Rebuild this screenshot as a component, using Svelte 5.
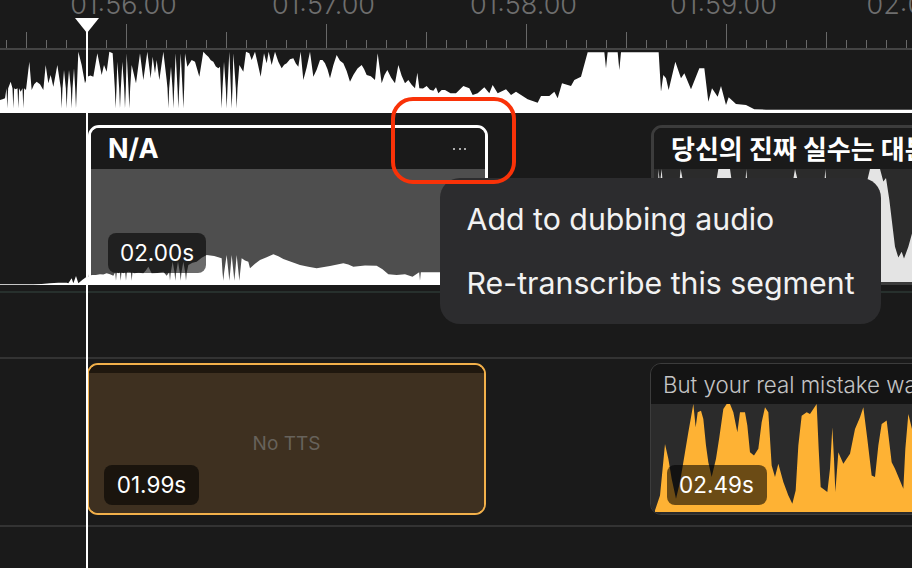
<script lang="ts">
    const labels = ["01:56.00", "01:57.00", "01:58.00", "01:59.00", "02:00.00"];
    const ticks = Array.from({ length: 46 }, (_, i) => (i % 10 === 6 ? "tall" : i % 10 === 1 ? "mid" : "small"));

    // points traced off the 3x crops, so the viewBoxes below are 3x as well
    const overviewLeft = [
        0,300, 15,295, 22,325, 32,245, 40,325, 47,268, 55,325, 62,275, 70,325, 78,270, 88,185, 95,270, 110,245, 130,270,
        137,195, 145,250, 152,225, 160,260, 172,195, 185,325, 192,210, 200,325, 207,210, 215,325, 222,205, 228,325, 235,155,
        245,195, 255,250, 262,230, 280,230, 292,160, 305,225, 312,195, 320,215, 328,155, 338,160, 347,325, 352,185, 360,325,
        367,185, 375,325, 380,160, 388,325, 395,195, 408,250, 420,160, 430,240, 442,155, 452,235, 458,170, 465,220, 470,180,
        478,240, 490,155, 500,240, 505,325, 513,200, 520,325, 527,160, 535,325, 542,160, 550,325, 555,160, 562,200, 575,180,
        585,185, 598,230, 610,155, 625,170, 640,185, 655,205, 660,200, 665,325, 672,185, 680,325, 688,155, 695,325, 700,160,
        710,325, 718,195, 730,215, 738,155, 748,160, 755,180, 765,155, 782,230, 792,160, 800,190, 806,155, 815,195, 825,155,
        845,205, 860,190, 880,175, 895,200, 902,155, 910,240, 930,155, 940,230, 960,180, 975,190, 990,235, 1010,165, 1030,190,
        1050,245, 1060,225, 1085,195, 1100,225, 1125,240, 1133,160, 1145,250, 1162,210, 1185,250, 1195,195, 1215,250, 1225,240,
        1245,265, 1252,218, 1258,265, 1280,258, 1300,272, 1308,262, 1315,280, 1335,270, 1368,280,
    ];
    const overviewRight = [
        0,280, 22,258, 40,265, 50,285, 65,280, 85,262, 100,280, 110,255, 125,280, 150,268, 165,285, 180,275, 215,298, 245,308,
        255,288, 280,288, 295,275, 305,295, 318,250, 345,258, 355,240, 375,230, 395,157, 445,157, 450,205, 455,157, 485,157,
        490,210, 495,157, 608,157, 615,275, 622,225, 630,235, 638,270, 658,185, 675,235, 685,220, 705,268, 730,205, 745,205,
        757,305, 768,265, 785,290, 795,258, 810,315, 818,292, 840,312, 870,315, 895,328, 930,329, 1368,329,
    ];
    const segmentWave = [
        0,508, 100,508, 150,505, 200,503, 205,505, 215,490, 220,505, 228,483, 235,505, 260,485, 275,480, 300,478, 320,475, 340,482,
        348,497, 355,475, 362,497, 370,475, 378,497, 385,470, 395,497, 402,475, 430,475, 445,455, 455,475, 490,470, 510,497, 518,440,
        526,497, 534,440, 542,497, 550,440, 558,497, 565,450, 590,440, 620,420, 665,430, 670,497, 680,420, 688,497, 695,420, 703,497,
        710,420, 718,497, 725,430, 745,440, 750,460, 780,435, 820,418, 850,432, 900,450, 950,460, 1030,445, 1060,455, 1130,452,
        1165,478, 1215,478, 1260,497, 1340,497,
    ];
    const nextWave = [
        55,148, 60,190, 65,148, 68,190, 118,190, 122,148, 130,190, 228,190, 235,148, 270,148, 276,190, 316,190, 319,148, 322,190,
        458,190, 465,148, 475,190, 553,190, 556,148, 559,190, 680,190, 690,148, 720,148, 730,185, 738,175, 748,240, 765,380, 775,412,
        785,395, 792,415, 805,380, 816,340,
    ];
    const ttsWave = [
        75,485, 90,440, 105,285, 115,330, 125,390, 138,450, 150,400, 165,310, 175,250, 190,165, 197,235, 203,190, 213,185, 220,210,
        228,290, 235,340, 245,385, 258,330, 268,265, 280,180, 290,165, 300,165, 310,190, 322,250, 330,190, 345,190, 352,230, 360,310,
        372,320, 385,300, 395,220, 405,175, 415,190, 425,350, 435,385, 445,345, 460,400, 475,440, 487,465, 497,425, 505,290, 515,200,
        530,190, 540,195, 560,165, 566,300, 572,415, 592,430, 600,360, 607,235, 612,330, 616,430, 625,310, 640,345, 660,315, 675,240,
        690,205, 700,175, 712,270, 725,380, 735,385, 745,290, 755,225, 770,215, 785,340, 795,360, 820,420, 826,300, 835,195, 846,240,
    ];

    // dark gaps in the waveform close to a needle near the bottom, and long runs are never straight
    const refine = (pts: number[], deep: number, flank: number, wobble = 5) => {
        const out: number[] = [];
        for (let i = 0; i < pts.length; i += 2) {
            const [x, y] = [pts[i], pts[i + 1]];
            const gap = y >= deep && y < deep + 6;
            if (gap) out.push(x - 2.5, y - flank, x, y, x + 2.5, y - flank);
            else out.push(x, y);
            const nx = pts[i + 2];
            if (nx !== undefined && nx - x > 14 && !gap) {
                out.push((x + nx) / 2, (y + pts[i + 3]) / 2 + Math.sin(x * 1.7) * wobble);
            }
        }
        return out;
    };

    const toPath = (pts: number[], base: number, dx = 0) => {
        let d = `M${pts[0] + dx} ${base}`;
        for (let i = 0; i < pts.length; i += 2) d += `L${pts[i] + dx} ${pts[i + 1]}`;
        return `${d}L${pts[pts.length - 2] + dx} ${base}Z`;
    };
</script>

<div class="timeline">
    <div class="ruler">
        <div class="labels">
            {#each labels as label}
                <span>{label}</span>
            {/each}
        </div>
        <div class="ticks">
            {#each ticks as kind}
                <div class="tick-cell"><i class={kind}></i></div>
            {/each}
        </div>
    </div>

    <svg class="overview" viewBox="0 150 2736 189" preserveAspectRatio="none">
        <path d={toPath(refine(overviewLeft, 320, 60), 339)} fill="#fff" />
        <path d={toPath(overviewRight, 339, 1368)} fill="#fff" />
    </svg>

    <div class="track track-source">
        <div class="clip clip-selected">
            <div class="clip-head">
                <strong>N/A</strong>
                <span class="dots"><b></b><b></b><b></b></span>
            </div>
            <div class="clip-body"></div>
        </div>
        <div class="clip clip-next">
            <div class="clip-head"><strong>당신의 진짜 실수는 대본</strong></div>
            <div class="clip-body">
                <svg class="next-wave" viewBox="0 148 816 340" preserveAspectRatio="none">
                    <path d={toPath(nextWave, 488)} fill="#e4e4e4" />
                </svg>
            </div>
        </div>
        <svg class="segment-wave" viewBox="0 0 1368 510" preserveAspectRatio="none">
            <path d={toPath(refine(segmentWave, 495, 25, 2), 510)} fill="#fff" />
        </svg>
        <span class="time time-source">02.00s</span>
    </div>

    <div class="track track-gap"></div>

    <div class="track track-tts">
        <div class="clip clip-empty">
            <div class="clip-head"></div>
            <div class="clip-body">No TTS</div>
            <span class="time time-empty">01.99s</span>
        </div>
        <div class="clip clip-dub">
            <div class="clip-head">But your real mistake was</div>
            <div class="clip-body">
                <svg class="tts-wave" viewBox="63 165 783 325" preserveAspectRatio="none">
                    <path d={toPath(ttsWave, 490)} fill="#feb234" />
                </svg>
            </div>
            <span class="time time-dub">02.49s</span>
        </div>
    </div>

    <div class="playhead"></div>

    <div class="menu">
        <div class="menu-item">Add to dubbing audio</div>
        <div class="menu-item">Re-transcribe this segment</div>
    </div>

    <div class="highlight"></div>
</div>

<style>
    :global(body) {
        margin: 0;
        background: #1a1a1a;
    }

    .timeline {
        position: relative;
        width: 912px;
        height: 568px;
        overflow: hidden;
        background: #1a1a1a;
        font-family: Inter, "Noto Sans CJK KR", sans-serif;
        color: #fff;
    }

    .ruler {
        height: 50px;
        display: flex;
        flex-direction: column;
        justify-content: space-between;
    }

    .labels {
        display: flex;
        height: 18px;
        padding-left: 23.5px;
        align-items: flex-end;
        overflow: hidden;
        font-size: 27px;
        font-weight: 300;
        line-height: 26px;
        color: #6e6e6e;
    }

    .labels span {
        flex: 0 0 200px;
        text-align: center;
    }

    .ticks {
        display: flex;
        height: 26px;
        padding-left: 6px;
        border-bottom: 2px solid #444;
    }

    .tick-cell {
        flex: 0 0 20px;
        display: flex;
        align-items: flex-end;
    }

    .tick-cell i {
        display: block;
        width: 1.3px;
        background: #686868;
    }

    .small { height: 8px; }
    .mid { height: 16px; }
    .tall { height: 24px; }

    .overview {
        display: block;
        width: 912px;
        height: 63px;
    }

    .track {
        position: relative;
    }

    .track-source {
        height: 178px;
        border-bottom: 2px solid #27302d;
    }

    .track-gap {
        height: 64px;
        border-bottom: 2px solid #333;
    }

    .track-tts {
        height: 166px;
        border-bottom: 2px solid #333;
    }

    .clip {
        position: absolute;
        box-sizing: border-box;
        border-radius: 11px;
        overflow: hidden;
        display: flex;
        flex-direction: column;
    }

    .clip-head {
        display: flex;
        align-items: center;
        justify-content: space-between;
        flex: none;
    }

    .clip-body {
        flex: 1;
        min-height: 0;
    }

    .clip-head strong {
        font-weight: 700;
        white-space: nowrap;
    }

    .clip-selected {
        left: 88px;
        top: 12px;
        width: 400px;
        height: 160px;
        border: 3.5px solid #fff;
    }

    .clip-selected .clip-head {
        height: 40.5px;
        padding: 1px 19px 0 17px;
        box-sizing: border-box;
        background: #1a1a1a;
        font-size: 27px;
    }

    .clip-selected .clip-body {
        background: #4e4e4e;
    }

    .dots {
        display: flex;
        gap: 3.5px;
    }

    .dots b {
        width: 2px;
        height: 2px;
        border-radius: 50%;
        background: #ddd;
    }

    .clip-next {
        left: 651px;
        top: 12px;
        width: 320px;
        height: 160px;
        border: 3.5px solid #3c3c3c;
    }

    .clip-next .clip-head {
        height: 40.5px;
        padding: 0 0 1px 17px;
        box-sizing: border-box;
        background: #1a1a1a;
        font-size: 26px;
    }

    .clip-next .clip-body {
        background: #2b2b2b;
    }

    .next-wave {
        display: block;
        width: 272px;
        height: 114px;
        margin-left: -14px;
    }

    .segment-wave {
        position: absolute;
        left: 0;
        top: 2px;
        width: 456px;
        height: 170px;
    }

    .time {
        position: absolute;
        box-sizing: border-box;
        height: 40px;
        border-radius: 8px;
        background: rgba(0, 0, 0, 0.58);
        font-size: 22.5px;
        line-height: 40px;
        text-align: center;
        color: #fff;
    }

    .time-source {
        left: 108px;
        top: 120px;
        width: 98px;
    }

    .clip-empty {
        left: 87px;
        top: 4px;
        width: 399px;
        height: 152px;
        border: 2px solid #f2b04a;
    }

    .clip-empty .clip-head {
        height: 8px;
        background: #1f170e;
    }

    .clip-empty .clip-body {
        background: #3e3020;
        padding-top: 59px;
        text-align: center;
        font-size: 19px;
        line-height: 23px;
        color: #67625b;
    }

    .time-empty {
        left: 15px;
        top: 100px;
        width: 95px;
    }

    .clip-dub {
        left: 650px;
        top: 4px;
        width: 320px;
        height: 152px;
        border: 1.5px solid #3c3c3c;
    }

    .clip-dub .clip-head {
        height: 40px;
        padding-left: 12px;
        background: #141414;
        font-size: 22.3px;
        font-weight: 300;
        color: #c4c4c4;
        white-space: nowrap;
    }

    .clip-dub .clip-body {
        background: #2b2b2b;
    }

    .tts-wave {
        display: block;
        width: 261px;
        height: 108px;
    }

    .time-dub {
        left: 15.5px;
        top: 100.5px;
        width: 100px;
    }

    .playhead {
        position: absolute;
        left: 86px;
        top: 30px;
        width: 2px;
        height: 538px;
        background: #fff;
    }

    .playhead::before {
        content: "";
        position: absolute;
        left: -11px;
        top: -12px;
        border-left: 12px solid transparent;
        border-right: 12px solid transparent;
        border-top: 15px solid #fff;
    }

    .menu {
        position: absolute;
        left: 440px;
        top: 178px;
        width: 441px;
        height: 146px;
        box-sizing: border-box;
        padding: 9px 26.5px;
        border-radius: 20px;
        background: #2c2c2e;
    }

    .menu-item {
        height: 64px;
        font-size: 30.3px;
        line-height: 64px;
        color: #f2f2f2;
        white-space: nowrap;
    }

    .highlight {
        position: absolute;
        left: 391px;
        top: 97px;
        width: 125px;
        height: 87px;
        box-sizing: border-box;
        border: 4px solid #f93208;
        border-radius: 22px;
    }
</style>
